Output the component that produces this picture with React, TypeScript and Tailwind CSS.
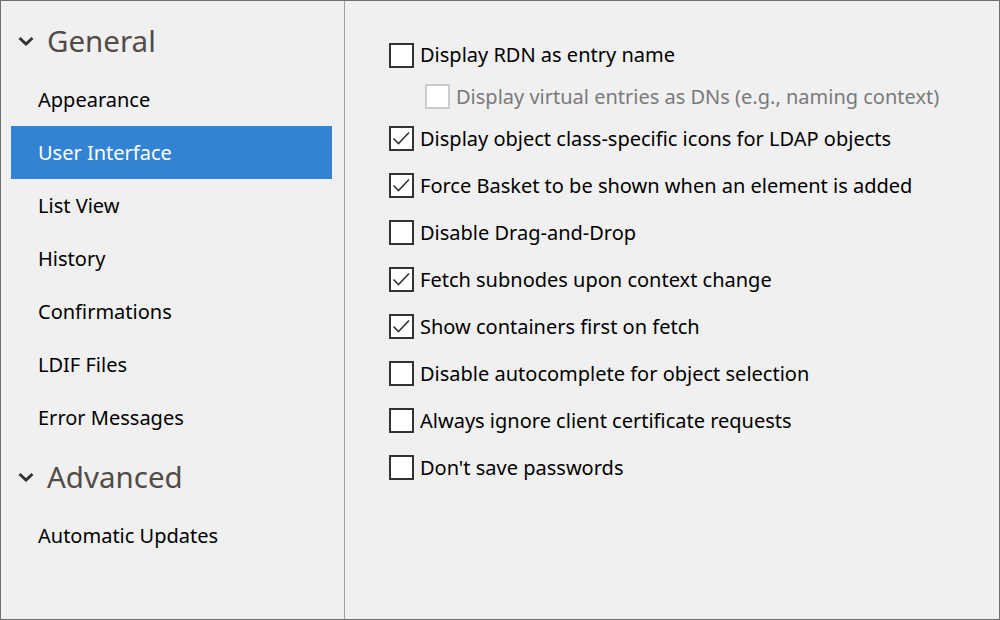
import React from "react";

// ─── Data ─────────────────────────────────────────────────────────────────────

const generalItems = [
  "Appearance",
  "User Interface",
  "List View",
  "History",
  "Confirmations",
  "LDIF Files",
  "Error Messages",
];

const advancedItems = ["Automatic Updates"];

type Option = { label: string; checked: boolean; sub?: boolean; disabled?: boolean };

const options: Option[] = [
  { label: "Display object class-specific icons for LDAP objects", checked: true },
  { label: "Force Basket to be shown when an element is added", checked: true },
  { label: "Disable Drag-and-Drop", checked: false },
  { label: "Fetch subnodes upon context change", checked: true },
  { label: "Show containers first on fetch", checked: true },
  { label: "Disable autocomplete for object selection", checked: false },
  { label: "Always ignore client certificate requests", checked: false },
  { label: "Don't save passwords", checked: false },
];

const font = { fontFamily: '"Noto Sans", "Open Sans", sans-serif' };

// ─── Sub-components ───────────────────────────────────────────────────────────

function Chevron() {
  return (
    <svg width="18" height="12" viewBox="0 0 18 12" className="shrink-0">
      <path d="M2.5 3 L9 9 L15.5 3" fill="none" stroke="#333" strokeWidth="3" />
    </svg>
  );
}

function GroupHeader({ label, className }: { label: string; className: string }) {
  return (
    <div className={`flex h-[64px] items-center pl-[6px] ${className}`}>
      <Chevron />
      <span className="ml-[12px] text-[29.5px] leading-none text-[#504c48]">{label}</span>
    </div>
  );
}

function NavItem({ label, active }: { label: string; active?: boolean }) {
  return (
    <div
      className={`flex h-[53px] items-center pl-[27px] text-[20px] ${
        active ? "bg-[#3383d4] text-white" : "text-black"
      }`}
    >
      {label}
    </div>
  );
}

function Checkbox({ checked, disabled }: { checked: boolean; disabled?: boolean }) {
  return (
    <span
      className={`flex h-[25px] w-[25px] shrink-0 items-center justify-center border-2 bg-white ${
        disabled ? "border-[#cccccc]" : "border-[#333333]"
      }`}
    >
      {checked && (
        <svg width="21" height="21" viewBox="0 0 21 21">
          <path d="M2.5 10.5 L7.5 15.5 L18 4.5" fill="none" stroke="#333" strokeWidth="1.6" />
        </svg>
      )}
    </span>
  );
}

function OptionRow({ opt, className }: { opt: Option; className: string }) {
  return (
    <label className={`flex items-center ${opt.sub ? "pl-[36px]" : ""} ${className}`}>
      <Checkbox checked={opt.checked} disabled={opt.disabled} />
      <span
        className={`ml-[6px] text-[20px] ${opt.disabled ? "text-[#7a7a7a]" : "text-black"}`}
      >
        {opt.label}
      </span>
    </label>
  );
}

// ─── App ──────────────────────────────────────────────────────────────────────

export default function App() {
  return (
    <div
      style={font}
      className="flex h-[620px] w-[1000px] border border-[#6e6e6e] bg-[#f0f0f0]"
    >
      {/* Sidebar */}
      <aside className="w-[344px] shrink-0 border-r border-[#a0a0a0] pl-[10px] pr-[12px]">
        <GroupHeader label="General" className="mt-[8px]" />
        {generalItems.map((it) => (
          <NavItem key={it} label={it} active={it === "User Interface"} />
        ))}
        <GroupHeader label="Advanced" className="mt-[1px]" />
        {advancedItems.map((it) => (
          <NavItem key={it} label={it} />
        ))}
      </aside>

      {/* Options */}
      <main className="flex-1 pl-[44px] pt-[31px]">
        <OptionRow
          opt={{ label: "Display RDN as entry name", checked: false }}
          className="h-[46px]"
        />
        <OptionRow
          opt={{
            label: "Display virtual entries as DNs (e.g., naming context)",
            checked: false,
            sub: true,
            disabled: true,
          }}
          className="h-[37px]"
        />
        {options.map((o) => (
          <OptionRow key={o.label} opt={o} className="h-[47px]" />
        ))}
      </main>
    </div>
  );
}
